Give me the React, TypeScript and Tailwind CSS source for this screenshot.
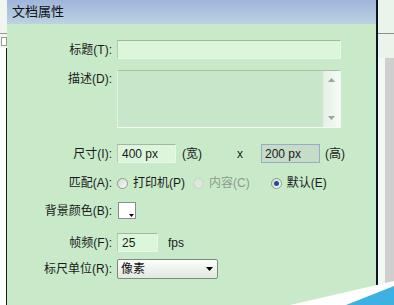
import React from "react";

const font = { fontFamily: '"Liberation Sans", "Noto Sans CJK SC", sans-serif' };

function Label({ children }: { children: React.ReactNode }) {
  return (
    <div className="w-[106px] shrink-0 text-right text-[12px] leading-none text-[#1a1a1a] pr-[1px]">
      {children}
    </div>
  );
}

function Radio({ checked, disabled }: { checked?: boolean; disabled?: boolean }) {
  return (
    <div
      className={
        "w-[11px] h-[11px] rounded-full border flex items-center justify-center " +
        (disabled
          ? "border-[#c4d4c4] bg-[#dce8dc]"
          : "border-[#8c9c8c] bg-gradient-to-br from-[#d8d8d8] to-[#fafafa]")
      }
    >
      {checked && <div className="w-[5px] h-[5px] rounded-full bg-[#1f4f9a]" />}
    </div>
  );
}

export default function App() {
  return (
    <div className="w-[394px] h-[305px] relative overflow-hidden flex bg-[#c8eac9]" style={font}>
      {/* left strip */}
      <div className="w-[7px] shrink-0 flex flex-col bg-[#f2f4f2]">
        <div className="h-[33px]" />
        <div className="h-[1px] bg-[#9a9a9a]" />
        <div className="h-[14px] flex items-center justify-center">
          <div className="w-[6px] h-[9px] border border-[#9a9a9a] bg-white" />
        </div>
        <div className="flex-1 bg-white border-r-[1px] border-[#1c1c1c]" />
      </div>

      {/* dialog */}
      <div className="w-[369px] shrink-0 flex flex-col">
        <div className="h-[24px] bg-gradient-to-b from-[#9fb5da] to-[#bcd3e3] flex items-center pl-[5px] text-[13px] text-[#111]">
          文档属性
        </div>
        <div className="flex flex-col pt-[16px]">
          {/* 标题 */}
          <div className="flex items-center h-[19px]">
            <Label>标题(T):</Label>
            <div className="ml-[4px] w-[224px] h-[19px] bg-[#dcf6dc] border border-t-[#a2b6a2] border-l-[#b6cab6] border-r-[#e8f8e8] border-b-[#e8f8e8]" />
          </div>
          {/* 描述 */}
          <div className="flex mt-[11px]">
            <Label>
              <div className="pt-[3px]">描述(D):</div>
            </Label>
            <div className="ml-[4px] w-[224px] h-[58px] flex border border-t-[#a8bea8] border-l-[#e4f4e4] border-r-[#eef8ee] border-b-[#f4fbf4] bg-[#c8e6c9]">
              <div className="flex-1" />
              <div className="w-[17px] flex flex-col justify-between items-center bg-gradient-to-r from-[#e4efe4] to-[#f6fbf6] py-[7px]">
                <svg width="7" height="4" viewBox="0 0 7 4">
                  <path d="M0 4 L3.5 0 L7 4 Z" fill="#9aa49a" />
                </svg>
                <svg width="7" height="4" viewBox="0 0 7 4">
                  <path d="M0 0 L3.5 4 L7 0 Z" fill="#9aa49a" />
                </svg>
              </div>
            </div>
          </div>
          {/* 尺寸 */}
          <div className="flex items-center mt-[16px] h-[19px]">
            <Label>尺寸(I):</Label>
            <div className="ml-[4px] w-[59px] h-[19px] bg-[#dcf6dc] border border-t-[#a2b6a2] border-l-[#b6cab6] border-r-[#e8f8e8] border-b-[#e8f8e8] flex items-center pl-[4px] text-[12px] text-[#1a1a1a]">
              400 px
            </div>
            <div className="ml-[6px] text-[12px] text-[#1a1a1a]">(宽)</div>
            <div className="ml-[35px] text-[12px] text-[#1a1a1a]">x</div>
            <div className="ml-[18px] w-[59px] h-[19px] bg-[#c6dcc8] border border-[#93aec6] flex items-center pl-[3px] text-[12px] text-[#1a1a1a]">
              200 px
            </div>
            <div className="ml-[5px] text-[12px] text-[#1a1a1a]">(高)</div>
          </div>
          {/* 匹配 */}
          <div className="flex items-center mt-[11px] h-[18px]">
            <Label>匹配(A):</Label>
            <div className="ml-[4px] flex items-center text-[12px]">
              <Radio />
              <span className="ml-[5px] text-[#1a1a1a]">打印机(P)</span>
              <div className="ml-[8px]">
                <Radio disabled />
              </div>
              <span className="ml-[5px] text-[#8c9a8c]">内容(C)</span>
              <div className="ml-[21px]">
                <Radio checked />
              </div>
              <span className="ml-[5px] text-[#1a1a1a]">默认(E)</span>
            </div>
          </div>
          {/* 背景颜色 */}
          <div className="flex items-center mt-[10px] h-[17px]">
            <Label>背景颜色(B):</Label>
            <div className="ml-[5px] w-[18px] h-[17px] bg-white border border-[#8c8c8c] relative">
              <svg className="absolute right-[1px] bottom-[1px]" width="5" height="3" viewBox="0 0 5 3">
                <path d="M0 0 L5 0 L2.5 3 Z" fill="#000" />
              </svg>
            </div>
          </div>
          {/* 帧频 */}
          <div className="flex items-center mt-[14px] h-[19px]">
            <Label>帧频(F):</Label>
            <div className="ml-[4px] w-[41px] h-[19px] bg-[#dcf6dc] border border-t-[#a2b6a2] border-l-[#b6cab6] border-r-[#e8f8e8] border-b-[#e8f8e8] flex items-center pl-[4px] text-[12px] text-[#1a1a1a]">
              25
            </div>
            <div className="ml-[10px] text-[12px] text-[#1a1a1a]">fps</div>
          </div>
          {/* 标尺单位 */}
          <div className="flex items-center mt-[7px] h-[20px]">
            <Label>标尺单位(R):</Label>
            <div className="ml-[4px] w-[101px] h-[20px] rounded-[2px] border border-[#7f8a7f] bg-gradient-to-b from-[#fbfdfb] to-[#e2e8e2] flex items-center justify-between pl-[3px] pr-[4px] text-[12px] text-[#111]">
              <span>像素</span>
              <svg width="7" height="4" viewBox="0 0 7 4">
                <path d="M0 0 L7 0 L3.5 4 Z" fill="#000" />
              </svg>
            </div>
          </div>
        </div>
      </div>

      {/* dark right border */}
      <div className="w-[2px] shrink-0 bg-[#0c1622]" />

      {/* right strip */}
      <div className="flex-1 flex flex-col bg-[#eaf4ea]">
        <div className="h-[33px]" />
        <div className="h-[1px] bg-[#8e8e8e]" />
        <div className="h-[24px]" />
        <div className="flex-1 flex">
          <div className="w-[7px] bg-[#f4f8f4]" />
          <div className="flex-1 bg-[#cfcfcf]" />
        </div>
      </div>

      {/* bottom-right wedge */}
      <svg className="absolute left-0 top-0" width="394" height="305" viewBox="0 0 394 305">
        <polygon points="290,305 394,281 394,305" fill="#ffffff" />
        <polygon points="346,305 394,286 394,305" fill="#3db2e2" />
      </svg>
    </div>
  );
}
